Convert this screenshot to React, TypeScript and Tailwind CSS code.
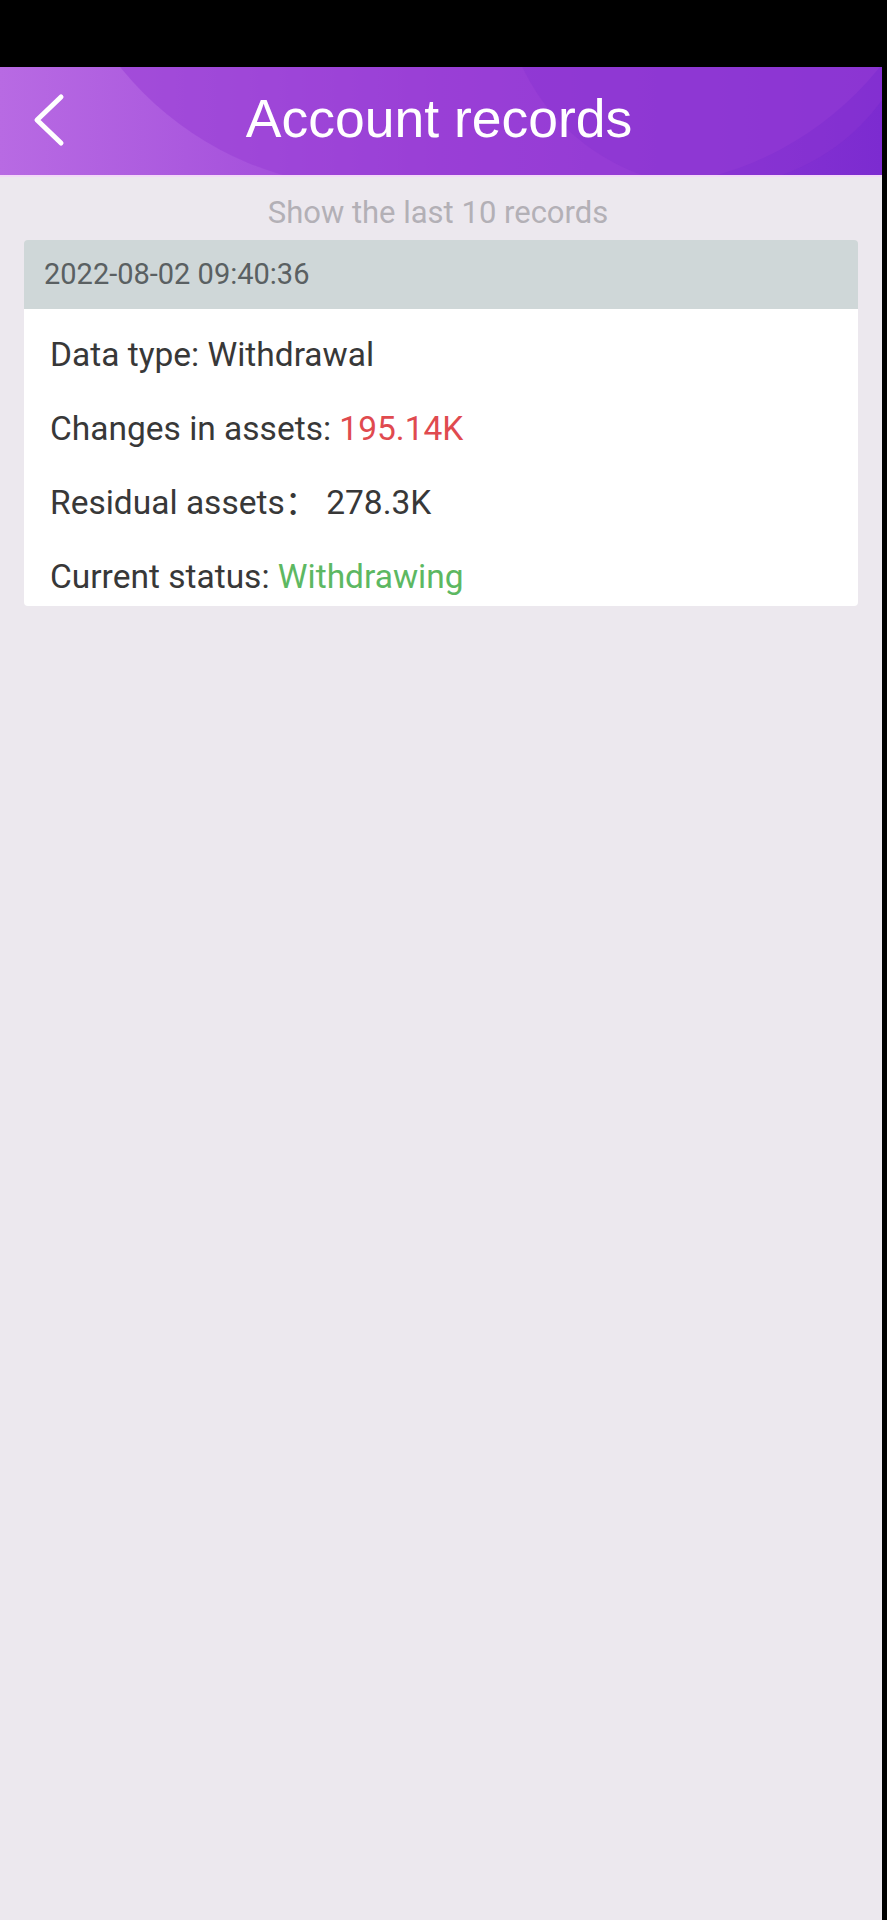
import React from "react";

export default function App() {
  const rowFont = { fontFamily: 'Roboto, "Noto Sans CJK SC", sans-serif' } as React.CSSProperties;
  return (
    <div className="min-h-[1920px] w-[887px] bg-black flex flex-col">
      <div className="h-[67px] w-full bg-black" />
      <div className="w-[882px] flex-1 bg-[#ece8ee] flex flex-col">
        <div className="relative h-[110px] w-full overflow-hidden bg-gradient-to-r from-[#b86ae3] via-[#9a3fd7] to-[#7c2bd0] border-b-2 border-[#f3d8f7]">
          <div className="absolute left-[50px] top-[-520px] w-[900px] h-[640px] rounded-full bg-[#9a40d6]/60" />
          <div className="absolute right-[-40px] top-[-300px] w-[420px] h-[420px] rounded-full bg-[#8a33d2]/50" />
          <div className="relative h-full flex items-center justify-center pb-[4px]">
            <svg
              className="absolute left-[31px] top-[26px]"
              width="36"
              height="54"
              viewBox="0 0 36 54"
              fill="none"
            >
              <path d="M30 4 L6 27 L30 50" stroke="white" strokeWidth="5" strokeLinecap="round" strokeLinejoin="round" />
            </svg>
            <span
              className="text-white text-[53.5px] leading-none pr-[4px]"
              style={{ fontFamily: '"Liberation Sans", Arial, sans-serif' }}
            >
              Account records
            </span>
          </div>
        </div>
        <div className="pt-[16px] pb-[7px] flex justify-center">
          <span className="text-[#b3b0b6] text-[31px] leading-[40px] pr-[6px]" style={rowFont}>
            Show the last 10 records
          </span>
        </div>
        <div className="mx-[24px] flex flex-col">
          <div className="h-[69px] bg-[#cfd7d8] rounded-t-[4px] flex items-center pl-[20px]">
            <span className="text-[#5a6062] text-[29px]" style={rowFont}>
              2022-08-02 09:40:36
            </span>
          </div>
          <div className="bg-white rounded-b-[4px] pl-[26px] pt-[26px] pb-[9px] flex flex-col gap-[34px] text-[#383838] text-[33.5px]" style={rowFont}>
            <div className="leading-[40px] h-[40px]">Data type: Withdrawal</div>
            <div className="leading-[40px] h-[40px]">
              Changes in assets: <span className="text-[#e04a4f]">195.14K</span>
            </div>
            <div className="leading-[40px] h-[40px]">
              Residual assets：<span className="ml-[8px]">278.3K</span>
            </div>
            <div className="leading-[40px] h-[40px]">
              Current status: <span className="text-[#5db862]">Withdrawing</span>
            </div>
          </div>
        </div>
      </div>
    </div>
  );
}
